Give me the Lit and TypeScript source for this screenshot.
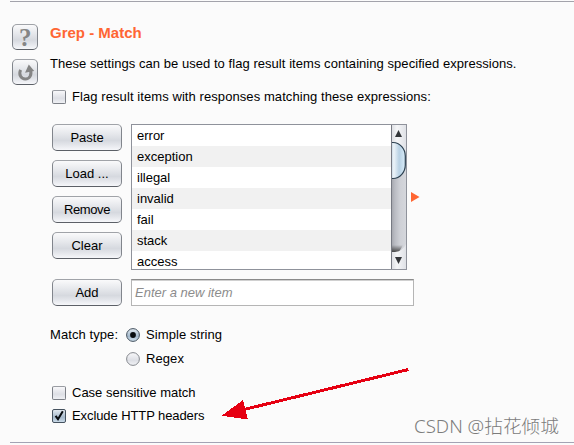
import { LitElement, html, css, svg } from "lit";
import { customElement } from "lit/decorators.js";

const PATTERNS = ["error", "exception", "illegal", "invalid", "fail", "stack", "access"];
const ACTIONS = ["Paste", "Load ...", "Remove", "Clear"];

@customElement("app-root")
export class AppRoot extends LitElement {
  static styles = css`
    :host {
      display: block;
      position: relative;
      box-sizing: border-box;
      width: 574px;
      height: 445px;
      overflow: hidden;
      background: #fbfbfb;
      color: #000;
      font: 13px/20px "Liberation Sans", Arial, sans-serif;
    }
    * { box-sizing: border-box; }
    .panel {
      display: flex;
      height: 442px;
      margin: 1px 0 0 10px;
      border-top: 1px solid #a3a3ab;
      border-bottom: 1px solid #a3a3b4;
    }
    .tools {
      display: flex;
      flex-direction: column;
      gap: 9px;
      width: 40px;
      padding: 22px 0 0 2px;
    }
    .tool, .button {
      border: 1px solid #81858c;
      border-top-color: #a0a3a8;
      border-bottom-color: #5c6067;
      border-radius: 5px;
      background: linear-gradient(#fafafb 0%, #e6e8ec 35%, #d6d9df 62%, #e4e6eb 80%, #f6f7fa 100%);
      padding: 0;
    }
    .tool { width: 26px; height: 26px; }
    .tool svg { display: block; overflow: visible; }
    .help { font: bold 25px/24px "Liberation Serif", serif; fill: #858585; }
    .main { display: flex; flex-direction: column; flex: 1; }
    .title { margin: 21px 0 0; font: bold 15px/20px "Liberation Sans", Arial, sans-serif; color: #ff6633; }
    .intro { margin: 11px 0 0; white-space: nowrap; letter-spacing: 0.05px; }
    .option { display: flex; align-items: center; gap: 6px; height: 20px; padding-left: 2px; white-space: nowrap; }
    .flag { margin-top: 13px; letter-spacing: 0.08px; }
    .box {
      width: 14px;
      height: 14px;
      border: 1px solid #7c8087;
      border-top-color: #9a9da3;
      border-radius: 2px;
      background: linear-gradient(#f8f8fa, #dddfe5 60%, #eff0f4);
    }
    .box.on { border-color: #45525f; background: linear-gradient(#e0e8ef, #a6b9cb 60%, #c9dae8); }
    .box svg { display: block; overflow: visible; }
    .editor { display: flex; gap: 9px; margin: 17px 0 0 2px; }
    .actions { display: flex; flex-direction: column; gap: 9px; }
    .button {
      display: block;
      width: 70px;
      height: 27px;
      font: inherit;
      line-height: 25px;
      text-align: center;
      color: #000;
    }
    .button.tight { letter-spacing: -0.4px; }
    .list {
      display: flex;
      width: 276px;
      height: 146px;
      border: 1px solid #8f929b;
      background: #fff;
      overflow: hidden;
    }
    .items { flex: 1; }
    .item { height: 21px; padding-left: 5px; line-height: 21px; }
    .item:nth-child(even) { background: #f1f1f1; }
    .scroll { display: block; flex: none; }
    .add { display: flex; gap: 9px; margin: 9px 0 0 2px; }
    .field {
      width: 283px;
      height: 27px;
      border: 1px solid #b5b5b5;
      border-top-color: #8b8b8b;
      box-shadow: inset 0 1px 0 #d0d0d0;
      background: #fff;
      padding-left: 3px;
      line-height: 25px;
      font-style: italic;
      color: #8c8c8c;
    }
    .match { display: grid; grid-template-columns: 76px auto; row-gap: 4px; margin-top: 19px; line-height: 20px; letter-spacing: 0.08px; }
    .choice { display: flex; align-items: center; gap: 6px; grid-column: 2; }
    .choice svg { display: block; }
    .case { margin-top: 14px; }
    .exclude { margin-top: 3px; letter-spacing: -0.09px; }
    .expand { position: absolute; left: 411px; top: 192px; }
    .arrow { position: absolute; left: 0; top: 0; pointer-events: none; }
    .mark {
      position: absolute;
      left: 414px;
      top: 414px;
      font: 18.7px/24px "Noto Sans", "Noto Sans CJK SC", sans-serif;
      font-weight: 300;
      color: #7c7c7c;
      white-space: nowrap;
    }
  `;

  private radio(on: boolean) {
    const face = on ? "face-on" : "face-off";
    return html`<svg width="14" height="14" viewBox="0 0 14 14">
      <defs>
        <linearGradient id=${face} x2="0" y2="1">
          <stop offset="0" stop-color=${on ? "#e5edf4" : "#f8f8fa"} />
          <stop offset=".6" stop-color=${on ? "#a4b9cc" : "#dddfe5"} />
          <stop offset="1" stop-color=${on ? "#d3e4f1" : "#f2f3f6"} />
        </linearGradient>
      </defs>
      <circle cx="7" cy="7" r="6.4" fill="url(#${face})" stroke=${on ? "#44515e" : "#85888e"} />
      ${on ? svg`<circle cx="7" cy="7" r="2.9" fill="#080c10" />` : ""}
    </svg>`;
  }

  private scrollbar() {
    return html`<svg class="scroll" width="15" height="144" viewBox="0 0 15 144">
      <defs>
        <linearGradient id="track">
          <stop offset="0" stop-color="#a0a2a9" />
          <stop offset=".25" stop-color="#b9bbc2" />
          <stop offset=".6" stop-color="#ced0d6" />
          <stop offset="1" stop-color="#d5d7dc" />
        </linearGradient>
        <linearGradient id="cap">
          <stop offset="0" stop-color="#d9dbe0" />
          <stop offset=".4" stop-color="#f5f6f8" />
          <stop offset="1" stop-color="#dfe1e6" />
        </linearGradient>
        <linearGradient id="thumb">
          <stop offset="0" stop-color="#a8bfd1" />
          <stop offset=".25" stop-color="#edf4f9" />
          <stop offset=".6" stop-color="#b8d1e4" />
          <stop offset="1" stop-color="#d9edfa" />
        </linearGradient>
        <linearGradient id="shade" x2="0" y2="1">
          <stop offset="0" stop-color="#333" stop-opacity="0" />
          <stop offset="1" stop-color="#333" stop-opacity=".85" />
        </linearGradient>
      </defs>
      <rect width="15" height="144" fill="url(#track)" />
      <rect width="15" height="30" fill="url(#cap)" />
      <path d="M0 120H12L8 127H0Z" fill="url(#shade)" />
      <path d="M0 127H4Q12 126 15 119V144H0Z" fill="url(#cap)" />
      <path d="M-1 17.5H2C9 17.5 14.3 24 14.3 31V40C14.3 47 9 53.5 2 53.5H-1Z" fill="url(#thumb)" stroke="#2c4050" stroke-width="1.2" />
      <path d="M.5 0V144" stroke="#777a83" />
      <path d="M4 12L7.5 5L11 12Z" fill="#33363a" />
      <path d="M4 132L7.5 139L11 132Z" fill="#33363a" />
    </svg>`;
  }

  render() {
    return html`
      <section class="panel">
        <aside class="tools">
          <div class="tool">
            <svg width="24" height="24" viewBox="0 0 24 24"><text class="help" x="12.2" y="20.7" text-anchor="middle">?</text></svg>
          </div>
          <div class="tool">
            <svg width="24" height="24" viewBox="0 0 24 24">
              <path d="M7.6 9.8C5.2 14.8 8.4 19 12.2 19C16.7 19 19 15 17.4 10" fill="none" stroke="#858585" stroke-width="3" />
              <path d="M15.8 4.6L21.2 11L12 12.8Z" fill="#858585" />
            </svg>
          </div>
        </aside>
        <div class="main">
          <h1 class="title">Grep - Match</h1>
          <p class="intro">These settings can be used to flag result items containing specified expressions.</p>
          <label class="option flag"><span class="box"></span><span>Flag result items with responses matching these expressions:</span></label>
          <div class="editor">
            <div class="actions">${ACTIONS.map((a) => html`<button class="button ${a === "Remove" ? "tight" : ""}">${a}</button>`)}</div>
            <div class="list">
              <div class="items">${PATTERNS.map((p) => html`<div class="item">${p}</div>`)}</div>
              ${this.scrollbar()}
            </div>
          </div>
          <div class="add">
            <button class="button">Add</button>
            <div class="field">Enter a new item</div>
          </div>
          <div class="match">
            <span>Match type:</span>
            <label class="choice">${this.radio(true)}<span>Simple string</span></label>
            <label class="choice">${this.radio(false)}<span>Regex</span></label>
          </div>
          <label class="option case"><span class="box"></span><span>Case sensitive match</span></label>
          <label class="option exclude">
            <span class="box on"><svg width="12" height="12" viewBox="0 0 12 12"><path d="M2.6 5.8L5 9.2L9.8 1.2" fill="none" stroke="#080c10" stroke-width="2" /></svg></span>
            <span>Exclude HTTP headers</span>
          </label>
        </div>
      </section>
      <svg class="expand" width="9" height="10" viewBox="0 0 9 10"><path d="M0 0L8.5 5L0 10Z" fill="#ff6633" /></svg>
      <svg class="arrow" width="574" height="445" viewBox="0 0 574 445" shape-rendering="crispEdges">
        <path d="M408.5 369.5L244 409.5" stroke="#e60012" stroke-width="3" />
        <path d="M221.5 415.8L243 400L248 419.5Z" fill="#e60012" />
      </svg>
      <div class="mark">CSDN @拈花倾城</div>
    `;
  }
}
